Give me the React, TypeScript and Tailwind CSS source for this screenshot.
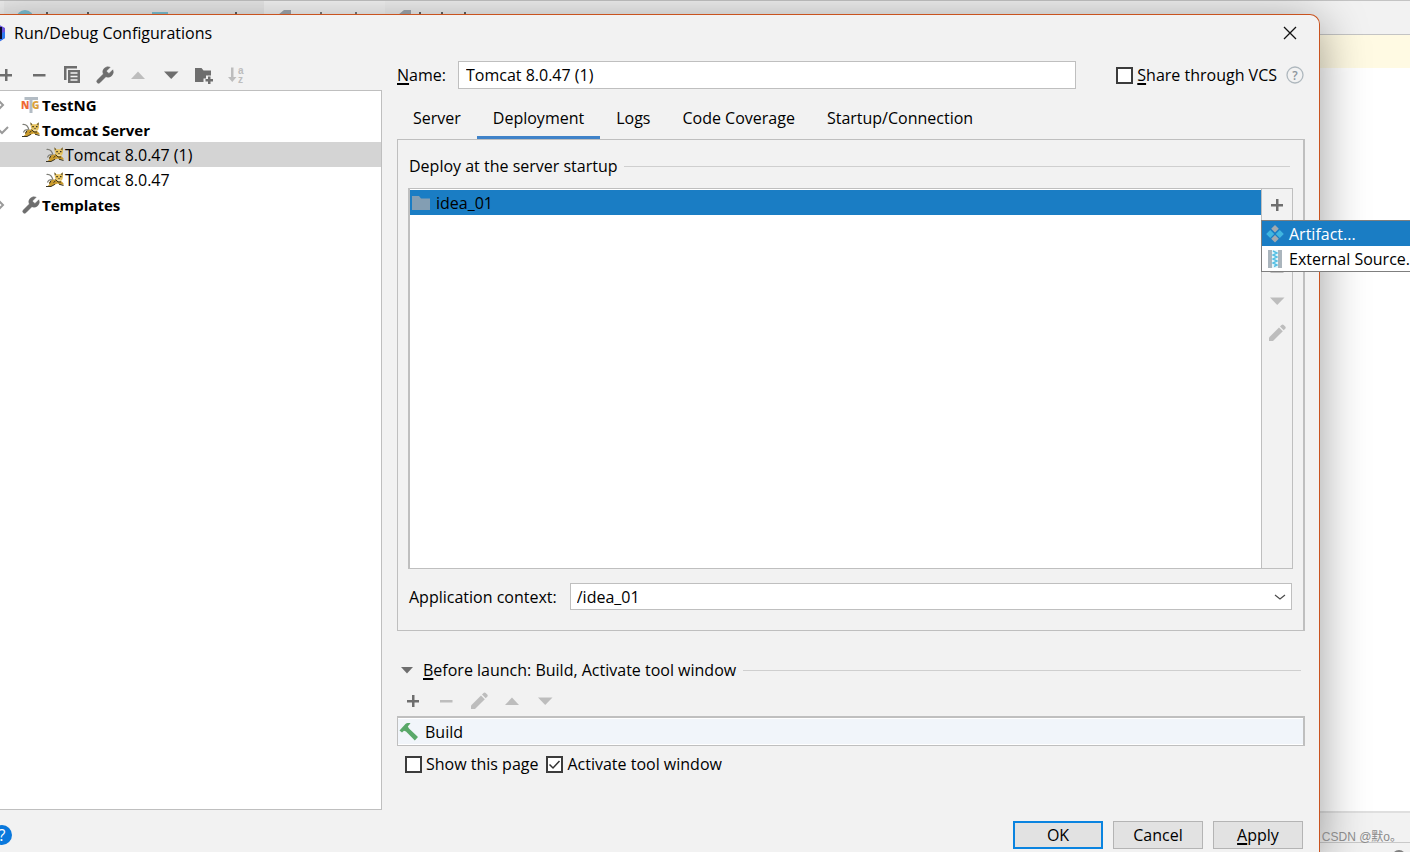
import { useState } from 'react';
import type { ReactNode } from 'react';
import clsx from 'clsx';

// ============================================
// Icons
// ============================================

const ICON = 'w-5 h-5 shrink-0';

const PlusIcon = () => (
  <svg viewBox="0 0 20 20" className={ICON} fill="#6e6e6e">
    <path d="M9 4h2.500v5H16v2.500h-4.500V16H9v-4.500H4V9h5z" />
  </svg>
);

const MinusIcon = ({ color = '#6e6e6e' }: { color?: string }) => (
  <svg viewBox="0 0 20 20" className={ICON} fill={color}>
    <path d="M4 9h12.500v2.500H4z" />
  </svg>
);

const CopyIcon = () => (
  <svg viewBox="0 0 20 20" className={ICON}>
    <path d="M2 1h13v2.500H4.500V15H2z" fill="#6e6e6e" />
    <path d="M6 5h12v13H6z" fill="#6e6e6e" />
    <path d="M8.500 8h7M8.500 11.500h7M8.500 15h7" stroke="#f2f2f2" strokeWidth="1.400" />
  </svg>
);

const WrenchIcon = () => (
  <svg viewBox="1 0 23 23" className={ICON} fill="#6e6e6e" stroke="#6e6e6e" strokeWidth="0.600">
    <path d="M14.7 6.3a1 1 0 0 0 0 1.4l1.6 1.6a1 1 0 0 0 1.4 0l3.77-3.77a6 6 0 0 1-7.94 7.94l-6.91 6.91a2.12 2.12 0 0 1-3-3l6.91-6.91a6 6 0 0 1 7.94-7.94l-3.76 3.76z" />
  </svg>
);

const UpIcon = () => (
  <svg viewBox="0 0 20 20" className={ICON} fill="#bdbdbd">
    <path d="M3 14L10 6.500l7 7.500z" />
  </svg>
);

const DownIcon = ({ color = '#bdbdbd' }: { color?: string }) => (
  <svg viewBox="0 0 20 20" className={ICON} fill={color}>
    <path d="M3 6.500h14.500L10.200 14z" />
  </svg>
);

const FolderAddIcon = () => (
  <svg viewBox="0 0 20 20" className={ICON} fill="#6e6e6e">
    <path d="M1 3h6.500l2 2.500H17v5h-5v3H9.500V17H1z" />
    <path d="M14 11.500h2.500v2.500H19v2.500h-2.500V19H14v-2.500h-2.500V14H14z" />
  </svg>
);

const SortIcon = () => (
  <svg viewBox="0 0 20 20" className={ICON} fill="#bdbdbd">
    <path d="M4 2.500h2.500v9.500h3L5.250 17 1 12h3z" />
    <text x="11" y="8.500" fontSize="10" fontWeight="700" fontFamily="Liberation Sans, sans-serif">a</text>
    <text x="11" y="18" fontSize="10" fontWeight="700" fontFamily="Liberation Sans, sans-serif">z</text>
  </svg>
);

const PencilIcon = () => (
  <svg viewBox="0 0 20 20" className={ICON} fill="#bdbdbd">
    <path d="M2 14.500L12 4.500l3.800 3.800L6 18H2z" />
    <path d="M13 3.500l1.500-1.500c.7-.7 1.500-.7 2.200 0l1.500 1.500c.7.7.7 1.500 0 2.200l-1.500 1.500z" />
  </svg>
);

const TestNgIcon = () => (
  <svg viewBox="0 0 20 20" className={ICON} fontFamily="Open Sans, sans-serif" fontWeight="800">
    <path d="M3.500 2H17v3h-5.500v13h-3V5h-5z" fill="#b3bcc4" />
    <text x="0" y="14" fontSize="10" fill="#ee6a36">N</text>
    <text x="11" y="14" fontSize="10" fill="#dda13a">G</text>
  </svg>
);

const TomcatIcon = () => (
  <svg viewBox="0 0 20 20" className={ICON}>
    <path d="M8 10C7 6 5 4 1.500 4.500M7 9.500C5 9.500 3 10.500 2.500 12.500" fill="none" stroke="#7d7d76" strokeWidth="1.200" />
    <path d="M4 12.500c1.500-2.500 4-3.500 7-3l5 1.500c1 1 2.500 2 3 3.500l-3.500.2-3-1.200-3 1.200-3 1.500H2.500l2-2z" fill="#c99a2c" />
    <path d="M9.500 2.500l2 1.700h3.500l2.500-1.700.6 4.500-1 3-2.500 1.500-3-1L10 8z" fill="#e6c25e" />
    <path d="M1 16.500h5l4-2.200M14 14.200l4.500 1.300M4.500 13.500l1.500-3M8.500 12.500l2-1.500M10.500 9.500l2.500 2.500h3" fill="none" stroke="#3a3524" strokeWidth="1" />
    <path d="M9.300 2.300l2 1.900-1.500 1.300zM17.800 2.300l-2 1.900 1.700 1.300z" fill="#5d5334" />
    <path d="M11.300 6h1.500v1.300h-1.500zM15 6h1.500v1.300H15zM13.300 8.300h1.400v1h-1.400z" fill="#33301f" />
    <path d="M12.500 9.700h3v.9h-3z" fill="#fffbe6" />
  </svg>
);

const FolderIcon = () => (
  <svg viewBox="0 0 20 20" className={ICON} fill="#839eb3">
    <path d="M1 3h7l2 2.500h9V17H1z" />
  </svg>
);

const ArtifactIcon = () => (
  <svg viewBox="0 0 20 20" className={ICON}>
    <path d="M10 1l3.800 3.800L10 8.500 6.200 4.800zM10 11l3.800 3.800L10 18.500l-3.800-3.700z" fill="#a3a9ae" />
    <path d="M5.200 6L9.200 10l-4 4-4-4zM14.800 6l4 4-4 4-4-4z" fill="#40b6e0" />
  </svg>
);

const ArchiveIcon = () => (
  <svg viewBox="0 0 20 20" className={ICON}>
    <path d="M3 1h4v18H3zM13 1h4v18h-4z" fill="#aab5bd" />
    <path d="M7 1h6v18H7z" fill="#e6f6fb" />
    <path d="M8 2l4 2-4 2 4 2-4 2 4 2-4 2 4 2-3 1.500" fill="none" stroke="#55c0e4" strokeWidth="1.400" />
  </svg>
);

const HammerIcon = () => (
  <svg viewBox="0 0 20 20" className={ICON} fill="#59a869">
    <path d="M.5 8.500L6 2.500c1.200-1.200 3-1.700 5.500-1.200l-2.700 3.200 1.200 2 9 8.500-3.200 3.500-8.800-9-2-.8L3 10.500z" />
  </svg>
);

const LogoIcon = () => (
  <svg viewBox="0 0 20 20" className={ICON}>
    <path d="M2 3l11-2 7 4v10l-6 4H3z" fill="#6b57e0" />
    <path d="M13 11l7-2v6l-6 4z" fill="#2f7cf0" />
    <path d="M3 4h14v12H3z" fill="#0b0b2a" />
  </svg>
);

const Chevron = ({ open }: { open?: boolean }) => (
  <svg viewBox="0 0 20 20" className={ICON} fill="none" stroke="#9a9a9a" strokeWidth="2">
    <path d={open ? 'M4 8l5 5 6-6' : 'M5 5l5 5-5 5'} />
  </svg>
);

// ============================================
// Data
// ============================================

const TABS = ['Server', 'Deployment', 'Logs', 'Code Coverage', 'Startup/Connection'];

const CONFIG_ACTIONS: Array<{ label: string; icon: ReactNode; disabled?: boolean }> = [
  { label: 'Add', icon: <PlusIcon /> },
  { label: 'Remove', icon: <MinusIcon /> },
  { label: 'Copy', icon: <CopyIcon /> },
  { label: 'Edit templates', icon: <WrenchIcon /> },
  { label: 'Move up', icon: <UpIcon />, disabled: true },
  { label: 'Move down', icon: <DownIcon color="#6e6e6e" /> },
  { label: 'New folder', icon: <FolderAddIcon /> },
  { label: 'Sort', icon: <SortIcon />, disabled: true },
];

// ============================================
// Small controls
// ============================================

interface IconButtonProps {
  label: string;
  disabled?: boolean;
  children: ReactNode;
}

const IconButton = ({ label, disabled, children }: IconButtonProps) => (
  <button type="button" aria-label={label} disabled={disabled} className="flex h-8 w-8 items-center justify-center">
    {children}
  </button>
);

const Mnemonic = ({ text }: { text: string }) => (
  <>
    <span className="underline decoration-2 underline-offset-2">{text[0]}</span>
    {text.slice(1)}
  </>
);

interface CheckboxProps {
  defaultChecked?: boolean;
  children: ReactNode;
}

const Checkbox = ({ defaultChecked, children }: CheckboxProps) => (
  <label className="flex items-center gap-1 whitespace-nowrap">
    <span className="grid">
      <input
        type="checkbox"
        defaultChecked={defaultChecked}
        className="peer col-start-1 row-start-1 h-[17px] w-[17px] appearance-none border-2 border-[#3c3c3c] bg-white"
      />
      <svg
        viewBox="0 0 17 17"
        className="pointer-events-none invisible col-start-1 row-start-1 h-[17px] w-[17px] peer-checked:visible"
        fill="none"
        stroke="#333"
        strokeWidth="1.500"
      >
        <path d="M3.500 8.500l3.500 3.500 6.500-7" />
      </svg>
    </span>
    <span>{children}</span>
  </label>
);

interface TreeRowProps {
  icon: ReactNode;
  label: string;
  open?: boolean;
  child?: boolean;
  selected?: boolean;
}

const TreeRow = ({ icon, label, open, child, selected }: TreeRowProps) => (
  <li
    role="treeitem"
    aria-selected={!!selected}
    className={clsx('flex h-[25px] items-center', selected && 'bg-[#d4d4d4]', child ? 'pl-[60px]' : 'gap-px pl-2')}
  >
    {!child && (
      <span className="flex w-[27px]">
        <Chevron open={open} />
      </span>
    )}
    {icon}
    <span className={clsx(!child && 'text-[15px] font-bold')}>{label}</span>
  </li>
);

// ============================================
// IDE window behind the dialog
// ============================================

const IdeBackdrop = () => (
  <div className="flex h-full flex-col bg-white" aria-hidden="true">
    <div className="h-[35px] border-y border-[#c4c4c4] bg-[#f2f2f2]">
      <div className="flex h-full pl-1">
        <div className="w-[260px] bg-[#ececec]">
          <svg viewBox="0 0 260 33" className="h-[33px] w-[260px]">
            <circle cx="21" cy="18" r="9" fill="#7fc4d8" />
            <path d="M43 11v10M84 11v10M232 11v10" stroke="#333" strokeWidth="1.500" />
            <path d="M149 20v-8h14v8M156 12v8" fill="none" stroke="#7fc4d8" strokeWidth="2" />
          </svg>
        </div>
        <div className="w-[121px] bg-[#f7f7f7]">
          <svg viewBox="0 0 121 33" className="h-[33px] w-[121px]">
            <path d="M14 14l6-5v8zM20 9h7v12h-7z" fill="#a3abb2" />
            <path d="M57 11v10M92 11v10" stroke="#555" strokeWidth="1.500" />
          </svg>
        </div>
        <svg viewBox="0 0 121 33" className="h-[33px] w-[121px]">
          <path d="M13 14l6-5v8zM19 9h7v12h-7z" fill="#a3abb2" />
          <path d="M35 11v10M57 11v10M80 11v10" stroke="#333" strokeWidth="1.500" />
        </svg>
      </div>
    </div>
    <div className="h-[33px] bg-[#fffae3]" />
    <div className="flex-1" />
    <div className="flex h-[41px] flex-col border-t-2 border-[#dfdfdf] bg-[#f2f2f2]">
      <div className="h-[30px] border-b border-[#c9c9c9]" />
      <svg viewBox="0 0 20 9" className="h-[9px] w-5 self-end">
        <circle cx="9" cy="14" r="7" fill="#7f7f7f" />
      </svg>
    </div>
  </div>
);

// ============================================
// Left column
// ============================================

const ConfigurationTree = () => (
  <aside className="flex w-[398px] shrink-0 flex-col">
    <div className="flex h-[30px] items-center gap-px pl-[6px]">
      {CONFIG_ACTIONS.map((action) => (
        <IconButton key={action.label} label={action.label} disabled={action.disabled}>
          {action.icon}
        </IconButton>
      ))}
    </div>
    <ul role="tree" className="flex-1 border border-[#bfbfbf] bg-white pt-px">
      <TreeRow icon={<TestNgIcon />} label="TestNG" />
      <TreeRow icon={<TomcatIcon />} label="Tomcat Server" open />
      <TreeRow icon={<TomcatIcon />} label="Tomcat 8.0.47 (1)" child selected />
      <TreeRow icon={<TomcatIcon />} label="Tomcat 8.0.47" child />
      <TreeRow icon={<WrenchIcon />} label="Templates" />
    </ul>
  </aside>
);

// ============================================
// Deployment tab
// ============================================

const AddMenu = () => (
  <div role="menu" className="absolute top-[31px] -left-px z-10 w-[170px] border border-[#7f7f7f] bg-white">
    <button type="button" role="menuitem" className="flex h-[25px] w-full items-center gap-1 bg-[#1a7dc4] pl-[3px] text-white">
      <ArtifactIcon />
      Artifact...
    </button>
    <button type="button" role="menuitem" className="flex h-[25px] w-full items-center gap-1 pl-[3px] whitespace-nowrap">
      <ArchiveIcon />
      External Source...
    </button>
  </div>
);

const DeploymentPanel = () => (
  <section className="flex flex-1 flex-col border border-r-2 border-[#bfbfbf] px-[10px] pt-[14px] pb-5">
    <div className="flex h-6 items-center gap-[6px] pr-[3px] pl-px">
      <h2>Deploy at the server startup</h2>
      <div className="h-px flex-1 bg-[#cfcfcf]" />
    </div>
    <div className="mt-[10px] flex flex-1 border border-l-2 border-[#bfbfbf]">
      <ul className="flex-1 bg-white pt-px">
        <li className="flex h-[25px] items-center gap-[5px] bg-[#1a7dc4] pl-px">
          <FolderIcon />
          idea_01
        </li>
      </ul>
      <div className="relative flex w-[31px] flex-col items-center border-l border-[#bfbfbf]">
        <IconButton label="Add deployment">
          <PlusIcon />
        </IconButton>
        <IconButton label="Remove deployment" disabled>
          <MinusIcon color="#bdbdbd" />
        </IconButton>
        <IconButton label="Move deployment up" disabled>
          <UpIcon />
        </IconButton>
        <IconButton label="Move deployment down" disabled>
          <DownIcon />
        </IconButton>
        <IconButton label="Edit deployment" disabled>
          <PencilIcon />
        </IconButton>
        <AddMenu />
      </div>
    </div>
    <div className="mt-[14px] flex h-[27px] items-center gap-[13px] pr-px pl-px">
      <label htmlFor="context" className="whitespace-nowrap">Application context:</label>
      <div className="grid h-full flex-1">
        <select
          id="context"
          className="col-start-1 row-start-1 h-full w-full appearance-none border border-[#bfbfbf] bg-white px-[6px]"
        >
          <option>/idea_01</option>
        </select>
        <svg
          viewBox="0 0 12 12"
          className="pointer-events-none col-start-1 row-start-1 mr-[6px] h-3 w-3 self-center justify-self-end"
          fill="none"
          stroke="#4a4a4a"
          strokeWidth="1.200"
        >
          <path d="M1 4l5 4 5-4" />
        </svg>
      </div>
    </div>
  </section>
);

// ============================================
// Before launch
// ============================================

const BeforeLaunch = () => (
  <section className="mt-[27px]">
    <div className="flex h-6 items-center gap-[7px] pr-1">
      <button type="button" className="flex items-center gap-2 whitespace-nowrap">
        <svg viewBox="0 0 18 18" className="h-[18px] w-[18px]" fill="#6e6e6e">
          <path d="M4 6h12l-6 6.500z" />
        </svg>
        <span>
          <Mnemonic text="Before launch: Build, Activate tool window" />
        </span>
      </button>
      <div className="h-px flex-1 bg-[#cfcfcf]" />
    </div>
    <div className="mt-1 flex h-[30px] items-center gap-px">
      <IconButton label="Add task">
        <PlusIcon />
      </IconButton>
      <IconButton label="Remove task" disabled>
        <MinusIcon color="#bdbdbd" />
      </IconButton>
      <IconButton label="Edit task" disabled>
        <PencilIcon />
      </IconButton>
      <IconButton label="Move task up" disabled>
        <UpIcon />
      </IconButton>
      <IconButton label="Move task down" disabled>
        <DownIcon />
      </IconButton>
    </div>
    <ul className="border border-t-2 border-r-2 border-[#bfbfbf] bg-white py-px">
      <li className="flex h-[25px] items-center gap-[6px] bg-[#f1f5fa] pl-px">
        <HammerIcon />
        Build
      </li>
    </ul>
    <div className="mt-[6px] flex h-6 items-center gap-2 pl-2">
      <Checkbox>Show this page</Checkbox>
      <Checkbox defaultChecked>Activate tool window</Checkbox>
    </div>
  </section>
);

// ============================================
// App
// ============================================

const App = () => {
  const [name, setName] = useState('Tomcat 8.0.47 (1)');
  const [tab, setTab] = useState('Deployment');

  return (
    <div className="relative h-screen overflow-hidden font-['Open_Sans','Noto_Sans_CJK_SC',sans-serif] text-base leading-5 text-black">
      <IdeBackdrop />

      <div
        role="dialog"
        aria-labelledby="dialog-title"
        className="absolute top-[14px] right-[90px] bottom-0 -left-4 flex flex-col rounded-tr-[10px] border-t border-r border-[#c9531f] bg-[#f2f2f2] shadow-[0_8px_48px_rgba(0,0,0,0.4)]"
      >
        <header className="flex h-9 items-center pl-px">
          <LogoIcon />
          <h1 id="dialog-title" className="flex-1 pl-[9px]">Run/Debug Configurations</h1>
          <button type="button" aria-label="Close" className="mr-[22px]">
            <svg viewBox="0 0 14 14" className="h-[14px] w-[14px]" fill="none" stroke="#111" strokeWidth="1.300">
              <path d="M1 1l12 12M13 1L1 13" />
            </svg>
          </button>
        </header>

        <div className="flex min-h-0 flex-1 gap-[15px] pt-[9px]">
          <ConfigurationTree />

          <main className="flex min-w-0 flex-1 flex-col pr-[14px] pb-[34px]">
            <div className="flex h-[30px] items-center">
              <label htmlFor="name" className="w-[61px]">
                <Mnemonic text="Name:" />
              </label>
              <input
                id="name"
                value={name}
                onChange={(e) => setName(e.target.value)}
                className="mr-10 h-7 min-w-0 flex-1 border border-[#bfbfbf] bg-white px-[7px]"
              />
              <Checkbox>
                <Mnemonic text="Share through VCS" />
              </Checkbox>
              <button type="button" aria-label="Help on sharing" className="ml-[9px] pr-px">
                <svg viewBox="0 0 18 18" className="h-[18px] w-[18px]">
                  <circle cx="9" cy="9" r="8" fill="none" stroke="#afb8be" strokeWidth="1.300" />
                  <text x="9" y="13.500" textAnchor="middle" fontSize="12" fontWeight="600" fill="#8c969d">?</text>
                </svg>
              </button>
            </div>

            <nav role="tablist" className="-mb-px mt-2 flex h-[42px]">
              {TABS.map((item) => (
                <button
                  key={item}
                  type="button"
                  role="tab"
                  aria-selected={item === tab}
                  onClick={() => setTab(item)}
                  className={clsx(
                    'border-b-4 px-4 pt-[2px] whitespace-nowrap',
                    item === tab ? 'border-[#4083c9]' : 'border-transparent'
                  )}
                >
                  {item}
                </button>
              ))}
            </nav>

            <DeploymentPanel />
            <BeforeLaunch />
          </main>
        </div>

        <footer className="flex h-[42px] shrink-0 items-center gap-[10px] pt-[10px] pr-4 pb-[2px] pl-2">
          <button type="button" aria-label="Help" className="mr-auto h-5 w-5 rounded-full bg-[#0a78dc] text-center text-white">
            ?
          </button>
          <button type="button" className="h-7 w-[90px] border-2 border-[#0a84e0] bg-[#e2e2e2]">OK</button>
          <button type="button" className="h-7 w-[90px] border border-[#b4b4b4] bg-[#e2e2e2]">Cancel</button>
          <button type="button" className="h-7 w-[90px] border border-[#b4b4b4] bg-[#e2e2e2]">
            <Mnemonic text="Apply" />
          </button>
        </footer>
      </div>

      <p className="absolute right-2 bottom-[7px] font-['Liberation_Sans','Noto_Sans_CJK_SC',sans-serif] text-xs text-[#8a8a8a]">
        CSDN @默o。
      </p>
    </div>
  );
};

export default App;
